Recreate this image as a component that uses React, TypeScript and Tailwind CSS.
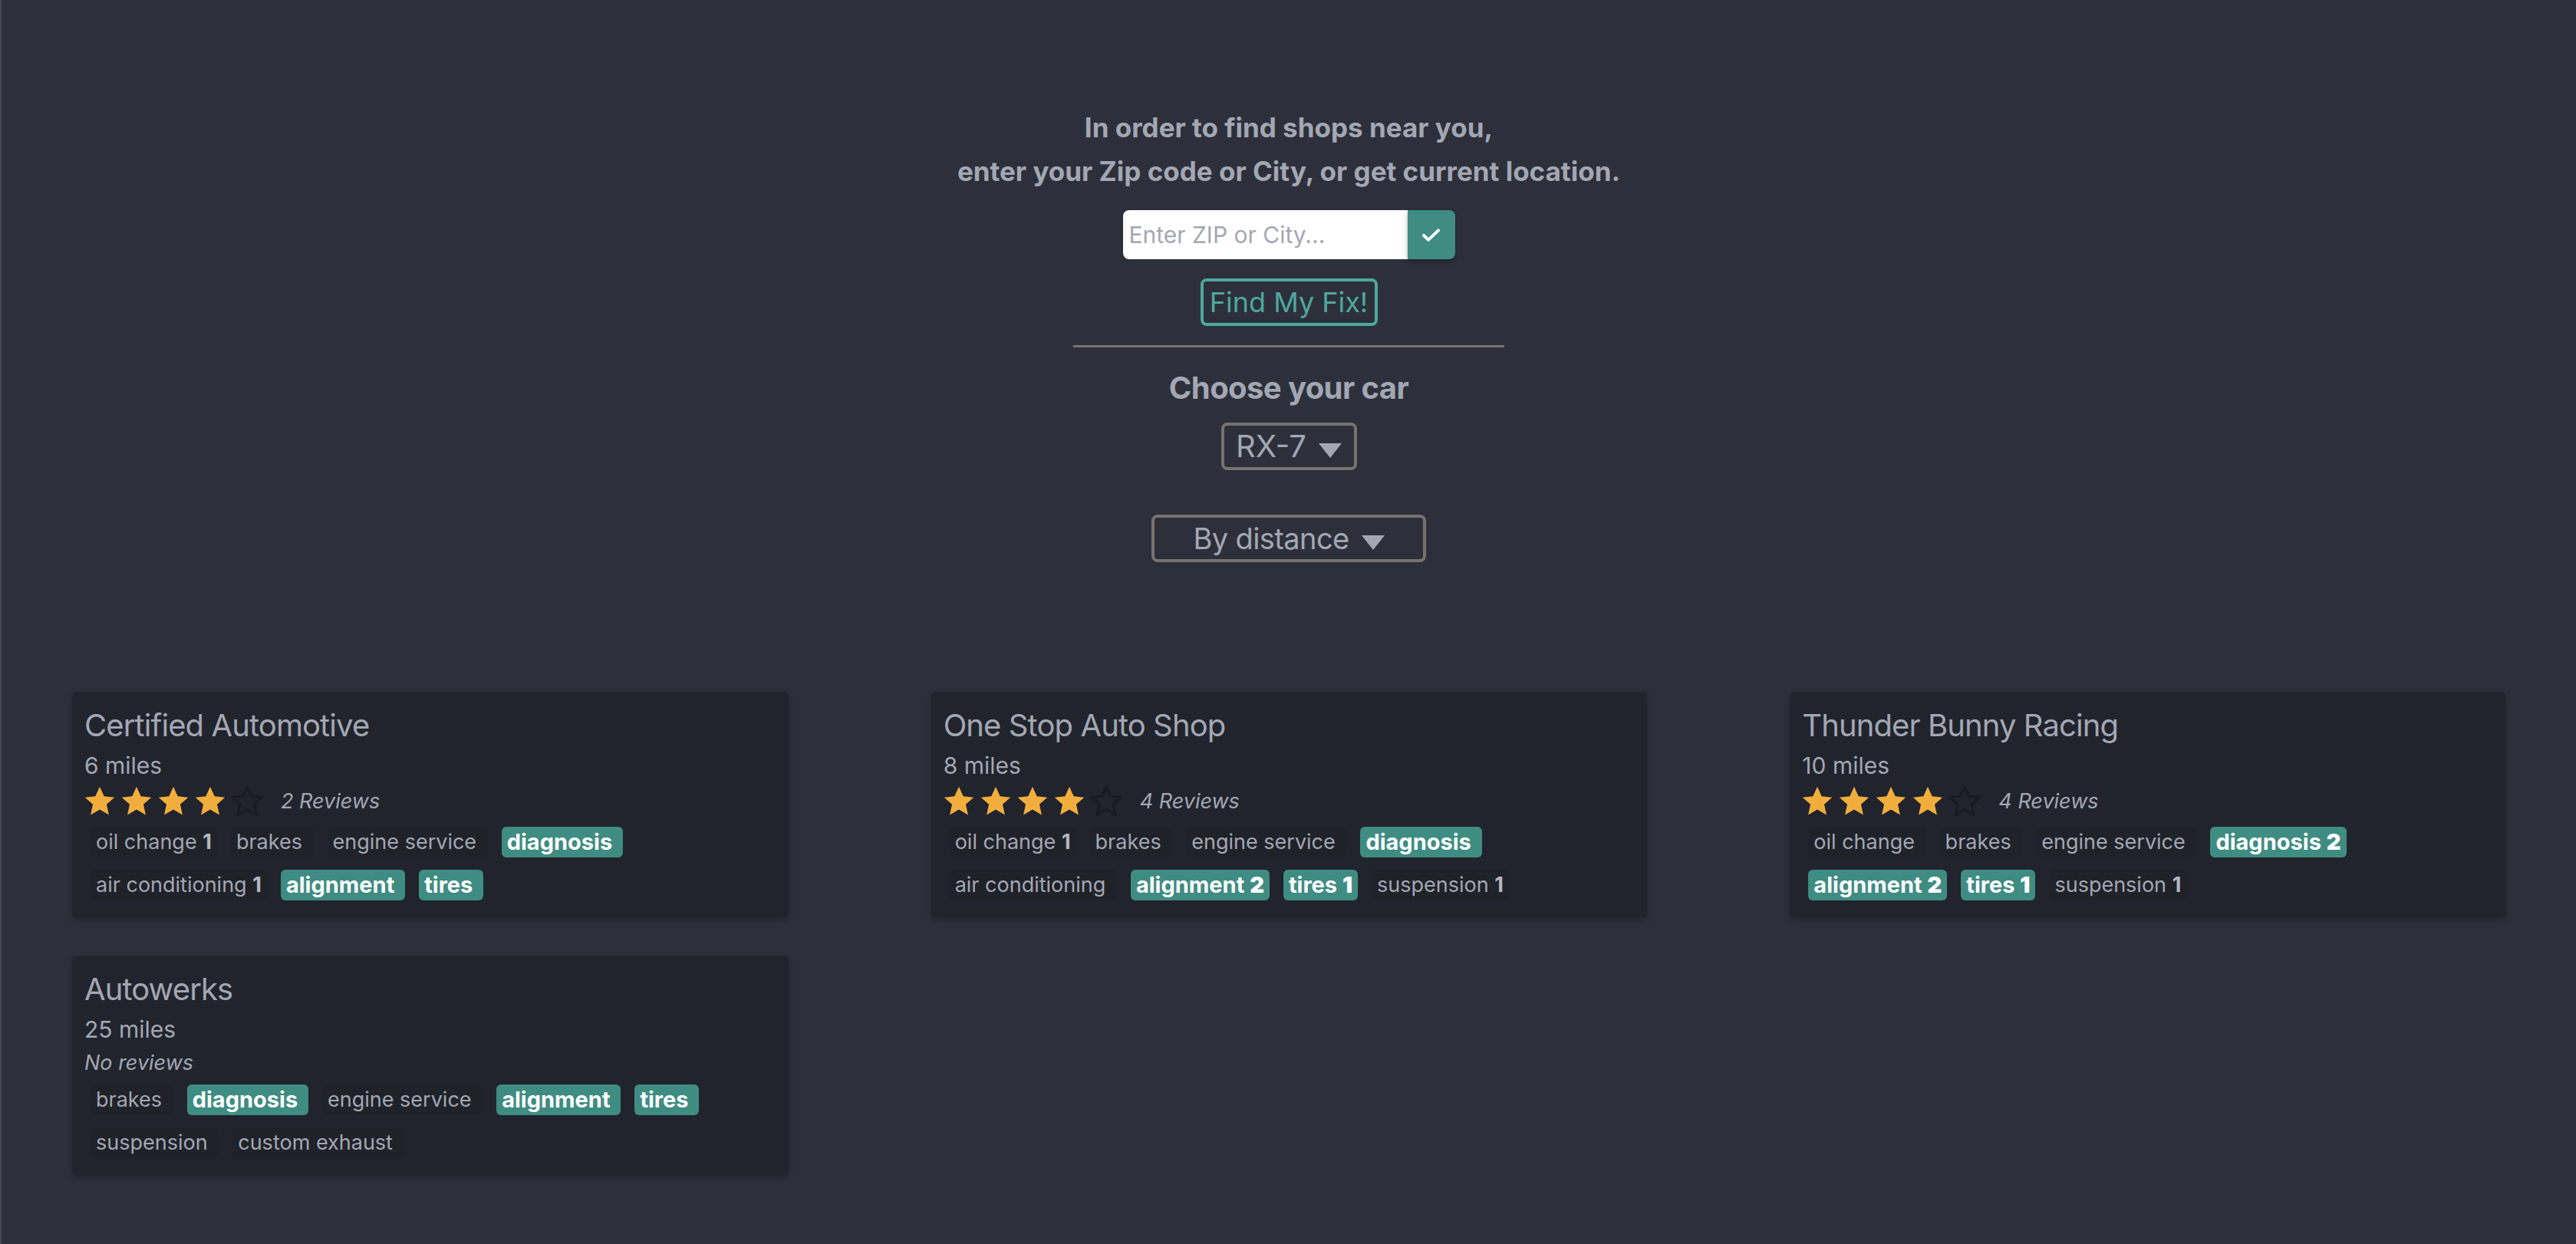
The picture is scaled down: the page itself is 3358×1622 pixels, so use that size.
import React from 'react'

type Tag = { name: string; count?: number; hl?: boolean }
type Shop = { name: string; miles: number; stars?: number; reviews?: number; tags: Tag[] }

const shops: Shop[] = [
  {
    name: 'Certified Automotive',
    miles: 6,
    stars: 4,
    reviews: 2,
    tags: [
      { name: 'oil change', count: 1 },
      { name: 'brakes' },
      { name: 'engine service' },
      { name: 'diagnosis', hl: true },
      { name: 'air conditioning', count: 1 },
      { name: 'alignment', hl: true },
      { name: 'tires', hl: true },
    ],
  },
  {
    name: 'One Stop Auto Shop',
    miles: 8,
    stars: 4,
    reviews: 4,
    tags: [
      { name: 'oil change', count: 1 },
      { name: 'brakes' },
      { name: 'engine service' },
      { name: 'diagnosis', hl: true },
      { name: 'air conditioning' },
      { name: 'alignment', count: 2, hl: true },
      { name: 'tires', count: 1, hl: true },
      { name: 'suspension', count: 1 },
    ],
  },
  {
    name: 'Thunder Bunny Racing',
    miles: 10,
    stars: 4,
    reviews: 4,
    tags: [
      { name: 'oil change' },
      { name: 'brakes' },
      { name: 'engine service' },
      { name: 'diagnosis', count: 2, hl: true },
      { name: 'alignment', count: 2, hl: true },
      { name: 'tires', count: 1, hl: true },
      { name: 'suspension', count: 1 },
    ],
  },
  {
    name: 'Autowerks',
    miles: 25,
    tags: [
      { name: 'brakes' },
      { name: 'diagnosis', hl: true },
      { name: 'engine service' },
      { name: 'alignment', hl: true },
      { name: 'tires', hl: true },
      { name: 'suspension' },
      { name: 'custom exhaust' },
    ],
  },
]

const Star = ({ filled }: { filled: boolean }) => (
  <svg viewBox="0 0 24 24" className="h-[44px] w-[44px]">
    <polygon
      points="12,1.5 15.1,8.3 22.5,9.1 16.9,14.1 18.5,21.5 12,17.7 5.5,21.5 7.1,14.1 1.5,9.1 8.9,8.3"
      fill={filled ? '#f2ae3d' : 'none'}
      stroke={filled ? 'none' : '#191b21'}
      strokeWidth={filled ? 0 : 1.8}
      strokeLinejoin="round"
    />
  </svg>
)

const Caret = () => (
  <svg viewBox="0 0 30 19" className="h-[19px] w-[30px]">
    <polygon points="0,0 30,0 15,19" fill="#a3a7b3" />
  </svg>
)

const ShopCard = ({ shop }: { shop: Shop }) => (
  <div className="rounded-[6px] bg-[#21242d] px-[16px] pt-[20px] pb-[23px] shadow-[0_3px_8px_rgba(0,0,0,0.22)]">
    <div className="text-[40px] leading-[48px] tracking-[-0.9px] text-[#a3a7b3]">{shop.name}</div>
    <div className="mt-[8px] text-[30px] leading-[40px] text-[#a3a7b3]">{shop.miles} miles</div>
    {shop.stars ? (
      <div className="mt-[9px] flex h-[36px] items-center">
        <div className="-ml-[2px] flex gap-[4px]">
          {[0, 1, 2, 3, 4].map((i) => (
            <Star key={i} filled={i < (shop.stars ?? 0)} />
          ))}
        </div>
        <span className="ml-[22px] text-[27px] italic text-[#a3a7b3]">{shop.reviews} Reviews</span>
      </div>
    ) : (
      <div className="mt-[9px] h-[30px] text-[27px] italic leading-[30px] text-[#a3a7b3]">No reviews</div>
    )}
    <div className={`mx-[8px] flex flex-wrap gap-x-[18px] gap-y-[16px] ${shop.stars ? 'mt-[15px]' : 'mt-[13px]'}`}>
      {shop.tags.map((t) => (
        <span
          key={t.name}
          className={
            t.hl
              ? 'h-[40px] rounded-[6px] bg-[#3f8c82] px-[7px] text-[29px] font-bold leading-[40px] text-white'
              : 'h-[40px] rounded-[6px] bg-[#1f2229] px-[7px] text-[27px] leading-[40px] text-[#a3a7b3]'
          }
        >
          {t.name}
          {'\u00a0'}
          {t.count ? <b className={t.hl ? 'text-white' : 'text-[#b4b8c3]'}>{t.count}</b> : null}
        </span>
      ))}
    </div>
  </div>
)

export default function App() {
  return (
    <div
      className="min-h-screen w-full border-l-[2px] border-[#474a55] bg-[#2d303b] pb-[90px] text-[#a3a7b3]"
      style={{ fontFamily: 'Inter, "Noto Sans", sans-serif' }}
    >
      <div className="flex flex-col items-center pt-[138px]">
        <div className="text-center text-[35px] font-bold leading-[57px]">
          <div>In order to find shops near you,</div>
          <div>enter your Zip code or City, or get current location.</div>
        </div>

        <div className="mt-[22px] flex h-[64px]">
          <input
            placeholder="Enter ZIP or City..."
            className="h-[64px] w-[371px] rounded-l-[8px] bg-white pl-[8px] text-[30px] text-[#333] outline-none placeholder:text-[#a3a7b3]"
          />
          <button className="flex h-[64px] w-[62px] items-center justify-center rounded-r-[8px] bg-[#3f8c82] shadow-[0_3px_6px_rgba(0,0,0,0.3)]">
            <svg viewBox="0 0 26 20" className="h-[19px] w-[25px]">
              <path d="M3 10.5 L9.5 16.5 L23 3.5" fill="none" stroke="white" strokeWidth="4.2" strokeLinecap="round" strokeLinejoin="round" />
            </svg>
          </button>
        </div>

        <button className="mt-[25px] h-[62px] w-[231px] rounded-[8px] border-[4px] border-[#4ea89e] text-[36px] leading-none text-[#4ea89e]">
          Find My Fix!
        </button>

        <div className="mt-[25px] h-[3px] w-[562px] bg-[#77726e]" />

        <div className="mt-[29px] text-[40px] font-bold leading-[48px] tracking-[-0.6px]">Choose your car</div>

        <button className="mt-[21px] flex h-[62px] w-[177px] items-center justify-center gap-[16px] rounded-[8px] border-[4px] border-[#77726e] text-[40px] text-[#a3a7b3]">
          <span>RX-7</span>
          <span className="mt-[10px] flex"><Caret /></span>
        </button>

        <button className="mt-[58px] flex h-[62px] w-[358px] items-center justify-center gap-[16px] rounded-[8px] border-[4px] border-[#77726e] text-[38px] tracking-[-0.6px] text-[#a3a7b3]">
          <span>By distance</span>
          <span className="mt-[10px] flex"><Caret /></span>
        </button>
      </div>

      <div className="mt-[169px] grid grid-cols-3 items-start gap-x-[186px] gap-y-[49px] pl-[92px] pr-[91px]">
        {shops.map((s) => (
          <ShopCard key={s.name} shop={s} />
        ))}
      </div>
    </div>
  )
}
